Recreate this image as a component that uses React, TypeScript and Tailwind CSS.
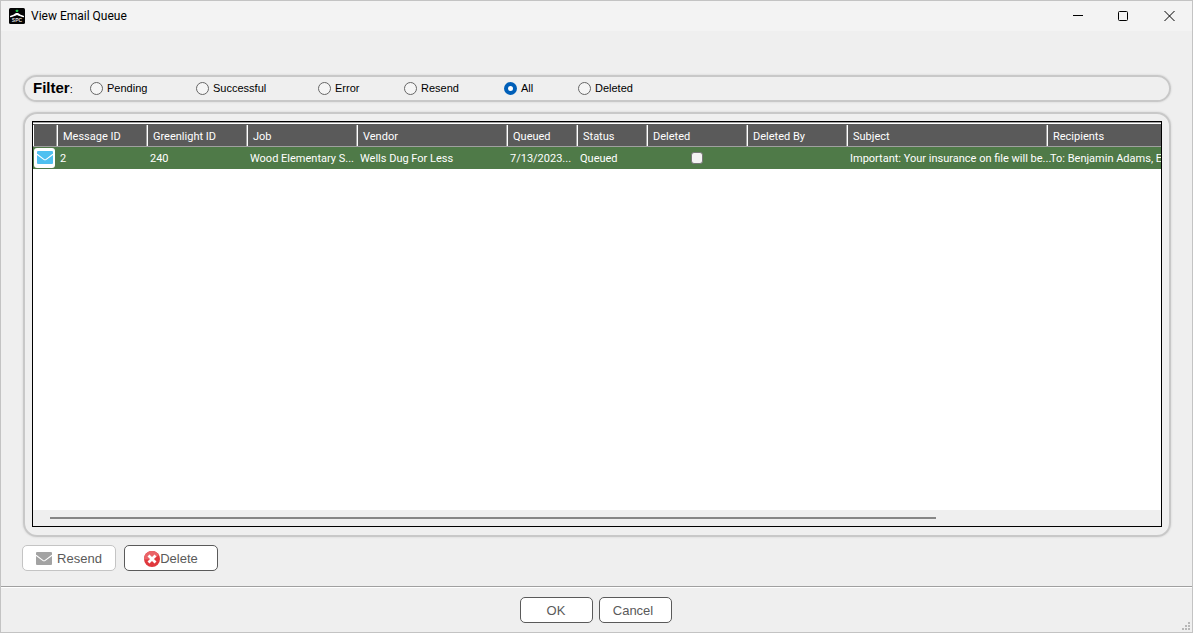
import { useState } from "react";

const filters = [
  { label: "Pending", width: "w-[106px]" },
  { label: "Successful", width: "w-[122px]" },
  { label: "Error", width: "w-[86px]" },
  { label: "Resend", width: "w-[100px]" },
  { label: "All", width: "w-[74px]" },
  { label: "Deleted", width: "w-[74px]" },
];

const columns = [
  { title: "Message ID", width: "w-[90px]" },
  { title: "Greenlight ID", width: "w-[100px]" },
  { title: "Job", width: "w-[110px]" },
  { title: "Vendor", width: "w-[150px]" },
  { title: "Queued", width: "w-[70px]" },
  { title: "Status", width: "w-[70px]" },
  { title: "Deleted", width: "w-[100px]" },
  { title: "Deleted By", width: "w-[100px]" },
  { title: "Subject", width: "w-[200px]" },
  { title: "Recipients", width: "" },
];

const rows = [
  {
    id: "2",
    greenlight: "240",
    job: "Wood Elementary S...",
    vendor: "Wells Dug For Less",
    queued: "7/13/2023...",
    status: "Queued",
    deletedBy: "",
    subject: "Important: Your insurance on file will be...",
    recipients: "To: Benjamin Adams, El",
  },
];

function AppLogo() {
  return (
    <svg className="size-4" viewBox="0 0 16 16" aria-hidden="true">
      <rect width="16" height="16" rx="1.500" fill="#050505" />
      <rect x="6.800" y="1.800" width="2.400" height="2.200" rx=".4" fill="#22c04a" />
      <path d="M1 7.900C3.500 7.300 5.500 6.200 7 5h2c1.500 1.200 3.500 2.300 6 2.900v1.400C12.500 8.900 10 8 8 7 6 8 3.500 8.900 1 9.300Z" fill="#fff" />
      <text x="8" y="13.600" textAnchor="middle" fontSize="5" fontWeight="700" fill="#ddd" fontFamily="Liberation Sans, sans-serif">
        SPC
      </text>
    </svg>
  );
}

function Envelope({ className, line }: { className: string; line: string }) {
  return (
    <svg className={className} viewBox="0 0 16 13" aria-hidden="true">
      <rect width="16" height="13" rx="1" fill="currentColor" />
      <path d="M0 3.200 6.800 8.400Q8 9.200 9.200 8.400L16 3.200" fill="none" stroke={line} strokeWidth="1.100" />
    </svg>
  );
}

function DeleteIcon() {
  return (
    <svg className="size-4" viewBox="0 0 16 16" aria-hidden="true">
      <circle cx="8" cy="8" r="8" fill="#e0393e" />
      <path d="M0 8.500a8 8 0 0 1 15-4.500Q10 9 0 8.500Z" fill="#ea6468" />
      <path d="m4.500 4.500 7 7m0-7-7 7" stroke="#fff" strokeWidth="2.800" />
    </svg>
  );
}

function TitleBar() {
  const control = "flex h-full items-center justify-center";
  return (
    <header className="flex h-[30px] shrink-0 items-center bg-[#f3f3f3] pl-2">
      <AppLogo />
      <h1 className="ml-1.5 grow font-[Roboto,sans-serif] text-[12px] text-black">View Email Queue</h1>
      <button type="button" aria-label="Minimize" className={`w-[45px] ${control}`}>
        <svg width="11" height="11" viewBox="0 0 11 11"><path d="M0 4.500h10" stroke="#000" /></svg>
      </button>
      <button type="button" aria-label="Maximize" className={`w-[45px] ${control}`}>
        <svg width="11" height="11" viewBox="0 0 11 11"><rect x=".5" y=".5" width="9" height="9" rx="1" fill="none" stroke="#000" /></svg>
      </button>
      <button type="button" aria-label="Close" className={`w-[46px] ${control}`}>
        <svg width="11" height="11" viewBox="0 0 11 11"><path d="m.5 0 10 10m0-10-10 10" stroke="#000" /></svg>
      </button>
    </header>
  );
}

export default function App() {
  const [filter, setFilter] = useState("All");
  const panel = "border-2 border-[#c8c8c8] shadow-[0_0_2px_#c8c8c8]";
  const cell = "p-0 pl-[3px] pt-0.5 leading-4 whitespace-nowrap";
  const button = "flex h-[26px] items-center justify-center rounded-[5px] border bg-white pt-px text-[13px]";

  return (
    <div className="flex min-h-screen flex-col border border-[#c3c3c3] bg-[#efefef] font-['Liberation_Sans',Arial,sans-serif] text-[11px] text-black">
      <TitleBar />
      <main className="flex grow flex-col pt-11 pr-[21px] pl-[22px]">
        <fieldset className={`flex h-[27px] items-center rounded-full pl-2 ${panel}`}>
          <span className="w-[57px] text-[11px]">
            <b className="text-[15px]">Filter</b>:
          </span>
          {filters.map((f) => (
            <label key={f.label} className={`flex shrink-0 items-center gap-1 ${f.width}`}>
              <input
                type="radio"
                name="filter"
                checked={filter === f.label}
                onChange={() => setFilter(f.label)}
                className="size-[13px] appearance-none rounded-full border border-[#666] bg-[#f5f5f5] checked:border-4 checked:border-[#005fb8] checked:bg-white"
              />
              {f.label}
            </label>
          ))}
        </fieldset>

        <section className={`mt-[10px] flex grow rounded-[14px] px-[7px] pt-[7px] pb-2 ${panel}`}>
          <div className="flex w-0 grow flex-col border border-black bg-white">
            <div className="grow overflow-hidden border-t border-[#a0a0a0]">
              <table className="w-full table-fixed border-collapse text-left font-[Roboto,sans-serif] text-white">
                <thead>
                  <tr className="h-[23px] border-t border-b border-t-white border-b-[#a0a0a0] bg-[#5a5a5a]">
                    <th className="w-6 p-0" aria-label="Type">
                      <div className="h-[21px] border-l border-white" />
                    </th>
                    {columns.map((c) => (
                      <th key={c.title} className={`p-0 font-normal ${c.width}`}>
                        <div className="h-[21px] border-l border-white pl-[5px] leading-[23px] shadow-[-1px_0_#a0a0a0]">{c.title}</div>
                      </th>
                    ))}
                  </tr>
                </thead>
                <tbody>
                  {rows.map((r) => (
                    <tr key={r.id} className="h-[22px] bg-[#4f7a48]">
                      <td className="p-0">
                        <div className="ml-px flex h-5 w-[21px] items-center justify-center rounded-[3px] bg-white">
                          <Envelope className="h-[13px] w-4 text-[#4fc0f0]" line="#fff" />
                        </div>
                      </td>
                      <td className={cell}>{r.id}</td>
                      <td className={cell}>{r.greenlight}</td>
                      <td className={cell}>{r.job}</td>
                      <td className={cell}>{r.vendor}</td>
                      <td className={cell}>{r.queued}</td>
                      <td className={cell}>{r.status}</td>
                      <td className="p-0">
                        <input
                          type="checkbox"
                          aria-label="Deleted"
                          className="mx-auto block size-3 appearance-none rounded-[3px] border border-[#777] bg-[#f3f3f3] checked:bg-[#005fb8]"
                        />
                      </td>
                      <td className={cell}>{r.deletedBy}</td>
                      <td className={cell}>{r.subject}</td>
                      <td className={cell}>{r.recipients}</td>
                    </tr>
                  ))}
                </tbody>
              </table>
            </div>
            <div className="flex h-4 items-center bg-[#efefef] px-[17px]">
              <div className="h-0.5 w-[81%] bg-[#868686]" />
            </div>
          </div>
        </section>

        <div className="-ml-px flex gap-2 pt-2 pb-[15px]">
          <button type="button" className={`w-[94px] gap-[5px] border-[#c4c4c4] text-[#5a5a5a] ${button}`}>
            <Envelope className="h-[13px] w-4 text-[#a3a3a3]" line="#fff" />
            Resend
          </button>
          <button type="button" className={`w-[94px] border-[#5a5a5a] text-[#5a5a5a] ${button}`}>
            <DeleteIcon />
            Delete
          </button>
        </div>
      </main>

      <footer className="relative flex h-[46px] shrink-0 justify-center gap-1.5 border-t border-[#a0a0a0] pt-[10px] pr-0.5 shadow-[inset_0_1px_#fff]">
        <button type="button" className={`w-[73px] border-[#5a5a5a] text-[#5a5a5a] ${button}`}>OK</button>
        <button type="button" className={`w-[73px] border-[#5a5a5a] pr-1 text-[#5a5a5a] ${button}`}>Cancel</button>
        <svg className="absolute right-0.5 bottom-0.5 size-2" viewBox="0 0 8 8" fill="#b8b8b8" aria-hidden="true">
          <path d="M6 0h2v2H6zM3 3h2v2H3zM6 3h2v2H6zM0 6h2v2H0zM3 6h2v2H3zM6 6h2v2H6z" />
        </svg>
      </footer>
    </div>
  );
}
